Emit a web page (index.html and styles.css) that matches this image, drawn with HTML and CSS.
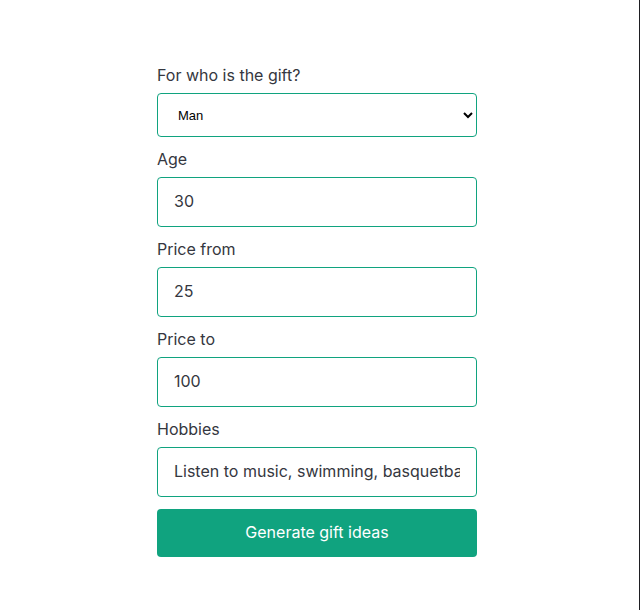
FILE: index.html
```html
<!DOCTYPE html>
<html lang="en">
<head>
<meta charset="utf-8">
<title>Gift generator</title>
<link rel="stylesheet" href="styles.css">
</head>
<body>
<main class="page">
  <form class="gift-form">
    <label class="field-label" for="who">For who is the gift?</label>
    <select class="field field-select" id="who" name="who">
      <option>Man</option>
      <option>Woman</option>
    </select>

    <label class="field-label" for="age">Age</label>
    <input class="field" id="age" type="number" value="30">

    <label class="field-label" for="from">Price from</label>
    <input class="field" id="from" type="number" value="25">

    <label class="field-label" for="to">Price to</label>
    <input class="field" id="to" type="number" value="100">

    <label class="field-label" for="hobbies">Hobbies</label>
    <input class="field" id="hobbies" type="text" value="Listen to music, swimming, basquetball">

    <button class="submit" type="button">Generate gift ideas</button>
  </form>
</main>
</body>
</html>
```

FILE: styles.css
```css
html {
  min-height: 100%;
  background: #ffffff;
  box-shadow: inset -1px 0 0 #1e1e22;
}

body {
  margin: 0;
  font-family: Inter, "Liberation Sans", Arial, sans-serif;
  color: #353740;
}

.page {
  display: flex;
  justify-content: center;
  padding: 63px 6px 0 0;
}

.gift-form {
  width: 320px;
  display: flex;
  flex-direction: column;
}

.field-label {
  display: block;
  font-size: 16px;
  line-height: 24px;
  margin-bottom: 6px;
  color: #353740;
}

.field {
  box-sizing: border-box;
  width: 100%;
  height: 50px;
  padding: 0 16px 3px;
  border: 1px solid #10a37f;
  border-radius: 4px;
  margin: 0 0 10px;
  font-family: inherit;
  font-size: 16px;
  color: #353740;
  background: #ffffff;
  outline-color: #10a37f;
}

.field[type="number"] {
  -moz-appearance: textfield;
}
.field::-webkit-outer-spin-button,
.field::-webkit-inner-spin-button {
  -webkit-appearance: none;
  margin: 0;
}

.field-select {
  height: 44px;
  padding: 0 12px 0 16px;
  font-family: "Liberation Sans", Arial, sans-serif;
  font-size: 13px;
  color: #000000;
  margin-bottom: 10px;
}

.submit {
  box-sizing: border-box;
  height: 48px;
  margin-top: 2px;
  padding: 0 0 3px;
  border: none;
  border-radius: 4px;
  background: #10a37f;
  color: #ffffff;
  font-family: inherit;
  font-size: 16px;
  cursor: pointer;
}
```
